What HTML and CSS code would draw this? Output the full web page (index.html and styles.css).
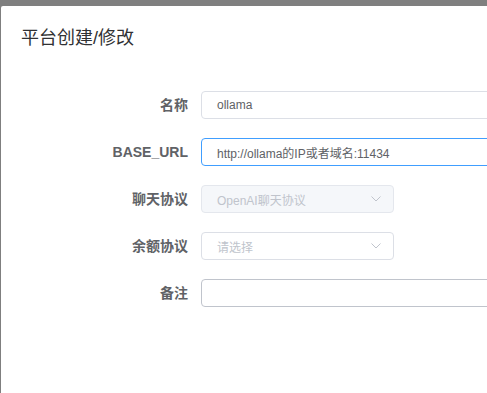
FILE: index.html
```html
<!DOCTYPE html>
<html lang="zh-CN">
<head>
<meta charset="utf-8">
<title>平台创建/修改</title>
<link rel="stylesheet" href="styles.css">
</head>
<body>
<div class="overlay">
  <div class="dialog">
    <div class="dialog-header">
      <span class="dialog-title">平台创建/修改</span>
    </div>
    <div class="dialog-body">
      <form class="form">
        <div class="form-item">
          <label class="form-label">名称</label>
          <div class="form-content">
            <div class="input wide"><span class="value">ollama</span></div>
          </div>
        </div>
        <div class="form-item">
          <label class="form-label latin">BASE_URL</label>
          <div class="form-content">
            <div class="input wide focused"><span class="value">http://ollama的IP或者域名:11434</span></div>
          </div>
        </div>
        <div class="form-item">
          <label class="form-label">聊天协议</label>
          <div class="form-content">
            <div class="input select disabled">
              <span class="value">OpenAI聊天协议</span>
              <svg class="arrow" width="10" height="6" viewBox="0 0 10 6"><polyline points="0.5,0.5 5,5 9.5,0.5" fill="none" stroke="#c0c4cc" stroke-width="1"/></svg>
            </div>
          </div>
        </div>
        <div class="form-item">
          <label class="form-label">余额协议</label>
          <div class="form-content">
            <div class="input select">
              <span class="placeholder">请选择</span>
              <svg class="arrow" width="10" height="6" viewBox="0 0 10 6"><polyline points="0.5,0.5 5,5 9.5,0.5" fill="none" stroke="#c0c4cc" stroke-width="1"/></svg>
            </div>
          </div>
        </div>
        <div class="form-item">
          <label class="form-label">备注</label>
          <div class="form-content">
            <div class="input wide hover"><span class="value"></span></div>
          </div>
        </div>
      </form>
    </div>
  </div>
</div>
</body>
</html>
```
FILE: styles.css
```css
* { box-sizing: border-box; }
html, body {
  margin: 0;
  padding: 0;
  width: 487px;
  height: 393px;
  overflow: hidden;
}
body {
  font-family: "Liberation Sans", "Noto Sans CJK SC", sans-serif;
  background: #7f7f7f;
}
.overlay {
  padding: 6px 0 0 1px;
  height: 393px;
}
.dialog {
  width: 486px;
  height: 387px;
  overflow: hidden;
  background: #fff;
  border-radius: 2px 0 0 0;
}
.dialog-header {
  padding: 20px 20px 10px;
}
.dialog-title {
  display: block;
  font-size: 18px;
  line-height: 24px;
  color: #303133;
}
.dialog-body {
  padding: 31px 0 0 20px;
}
.form {
  display: flex;
  flex-direction: column;
  gap: 19px;
}
.form-item {
  display: flex;
  align-items: center;
  height: 28px;
}
.form-label {
  flex: none;
  width: 180px;
  padding-right: 13px;
  text-align: right;
  font-size: 14px;
  font-weight: bold;
  color: #606266;
  line-height: 28px;
}
.form-content {
  flex: none;
  width: 420px;
  display: flex;
}
.input {
  height: 28px;
  border: 1px solid #dcdfe6;
  border-radius: 4px;
  background: #fff;
  padding: 0 15px;
  display: flex;
  align-items: center;
  font-size: 12px;
  color: #606266;
}
.input.wide { width: 420px; }
.input.focused { border-color: #409eff; }
.input.hover { border-color: #c0c4cc; }
.select {
  width: 193px;
  justify-content: space-between;
  padding-right: 12px;
}
.select.disabled {
  background: #f5f7fa;
  border-color: #e4e7ed;
  color: #c0c4cc;
}
.placeholder { color: #c0c4cc; }
.arrow { display: block; }
```
